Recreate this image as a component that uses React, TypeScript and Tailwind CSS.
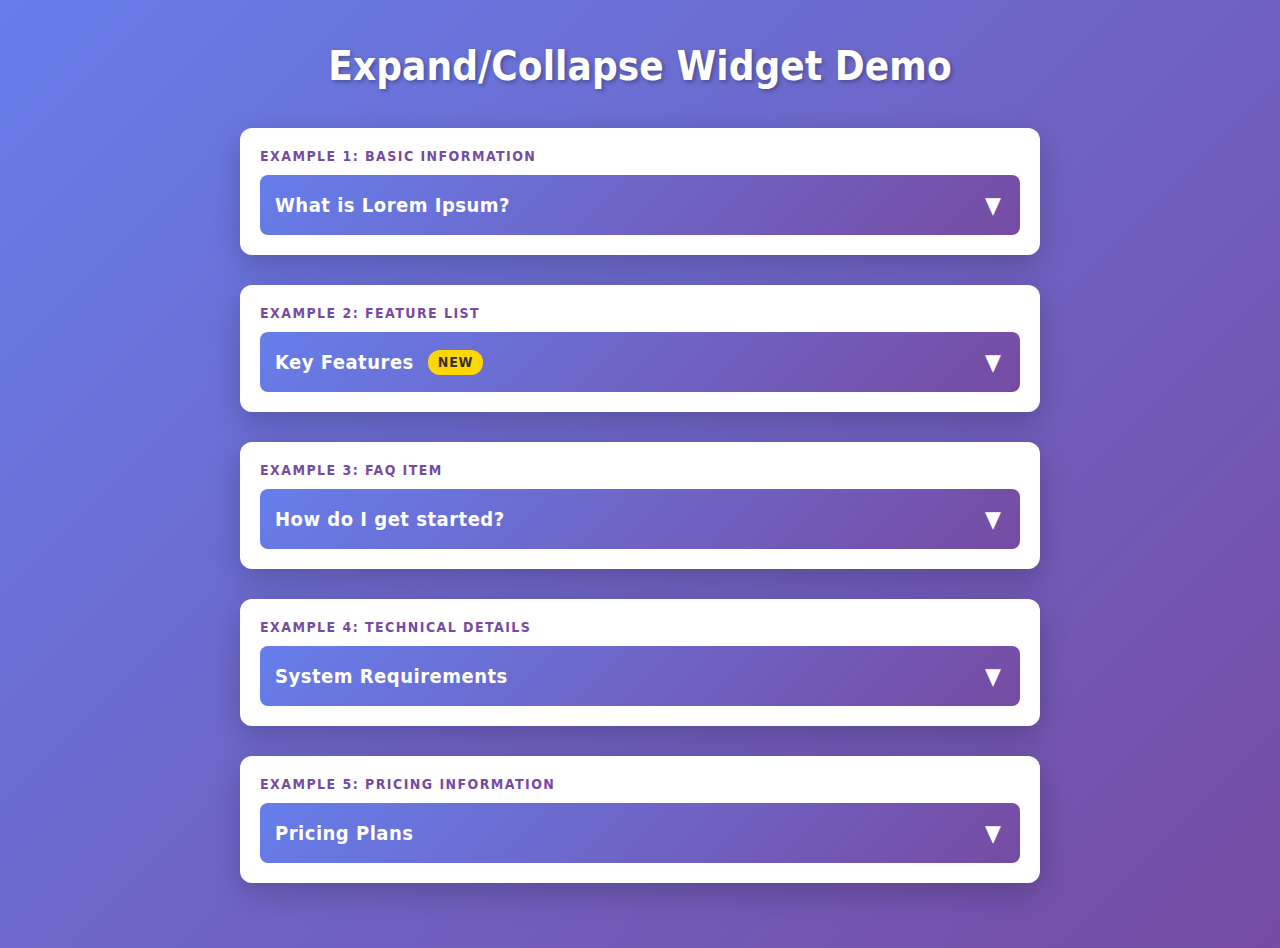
import React from 'react'

const items = [
  { label: 'Example 1: Basic Information', title: 'What is Lorem Ipsum?' },
  { label: 'Example 2: Feature List', title: 'Key Features', badge: 'NEW' },
  { label: 'Example 3: FAQ Item', title: 'How do I get started?' },
  { label: 'Example 4: Technical Details', title: 'System Requirements' },
  { label: 'Example 5: Pricing Information', title: 'Pricing Plans' },
]

export default function App() {
  return (
    <div
      className="min-h-[948px] w-full bg-[linear-gradient(135deg,#667eea_0%,#764ba2_100%)] px-5 pt-[42px] pb-10"
      style={{ fontFamily: "'DejaVu Sans Condensed', 'DejaVu Sans', sans-serif" }}
    >
      <h1 className="mb-[38px] text-center text-[40px] leading-[48px] font-bold tracking-[0.1px] text-white [text-shadow:2px_2px_4px_rgba(0,0,0,0.3)]">
        Expand/Collapse Widget Demo
      </h1>

      <div className="mx-auto flex w-[800px] flex-col gap-[30px]">
        {items.map((item) => (
          <div key={item.label} className="rounded-xl bg-white p-5 shadow-[0_10px_30px_rgba(0,0,0,0.2)]">
            <div className="mb-[10px] text-[14px] leading-[17px] font-bold tracking-[1.45px] text-[#764ba2] uppercase">
              {item.label}
            </div>
            <button className="flex h-[60px] w-full items-center justify-between rounded-lg bg-[linear-gradient(135deg,#667eea_0%,#764ba2_100%)] pr-[19px] pl-[15px] text-left text-white">
              <span className="flex items-center text-[20px] leading-[30px] font-bold tracking-[0.5px]">
                {item.title}
                {item.badge && (
                  <span className="ml-[14px] rounded-xl bg-[#ffd700] px-[10px] py-[2px] text-[14px] leading-[21px] font-bold tracking-[0.8px] text-[#333]">
                    {item.badge}
                  </span>
                )}
              </span>
              <span className="text-[23px] leading-[30px]">▼</span>
            </button>
          </div>
        ))}
      </div>
    </div>
  )
}
